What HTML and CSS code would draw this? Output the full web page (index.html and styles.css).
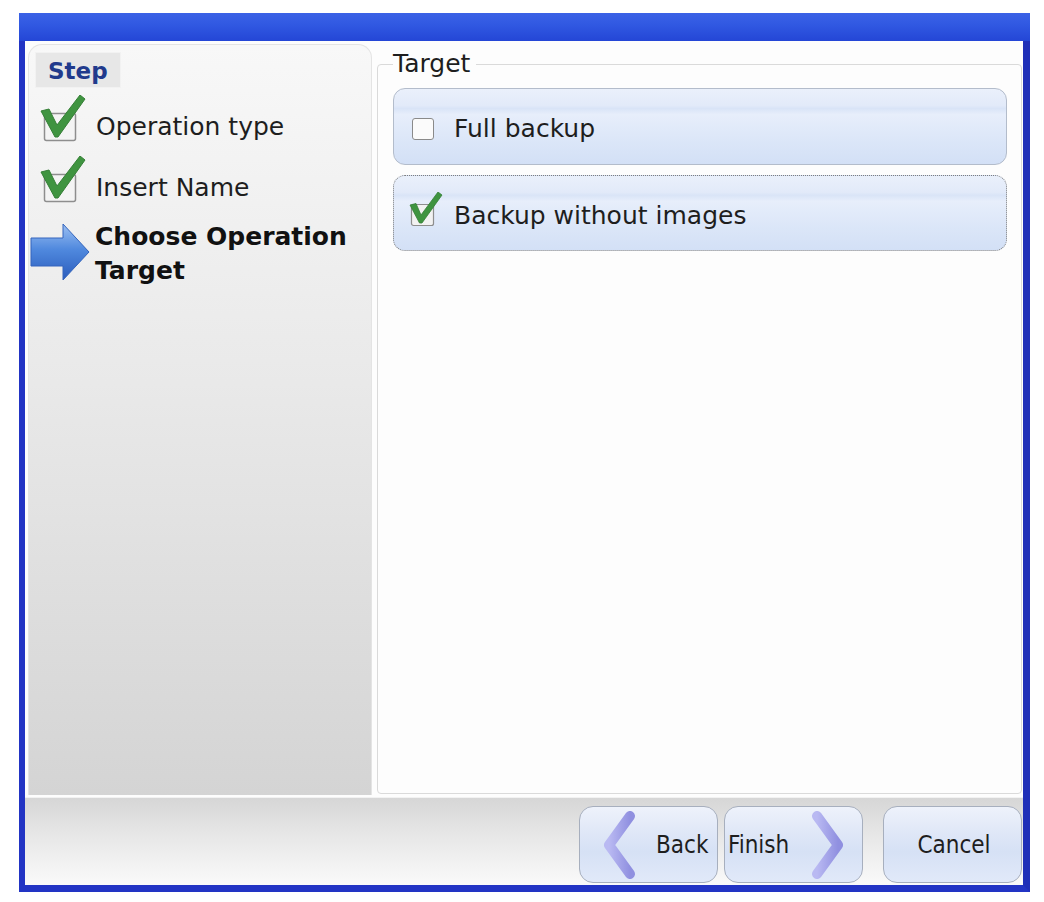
FILE: index.html
```html
<!DOCTYPE html>
<html>
<head>
<meta charset="utf-8">
<link rel="stylesheet" href="styles.css">
</head>
<body>
<div class="window">
  <div class="titlebar"></div>
  <div class="content">
    <div class="steps">
      <div class="step-header">Step</div>
      <div class="step step-1">
        <svg class="check-icon" width="46" height="50" viewBox="0 0 46 50">
          <rect x="4.5" y="18.5" width="31" height="27" rx="2" fill="#f4f4f4" stroke="#8e8e8e" stroke-width="1.5"/>
          <path d="M1 16 L9 14 L17 30 L40 0 L45 4 L18 42 L15 42 Z" fill="#3f9440" stroke="#357f36" stroke-width="1" stroke-linejoin="round"/>
        </svg>
        <span class="step-text">Operation type</span>
      </div>
      <div class="step step-2">
        <svg class="check-icon" width="46" height="50" viewBox="0 0 46 50">
          <rect x="4.5" y="18.5" width="31" height="27" rx="2" fill="#f4f4f4" stroke="#8e8e8e" stroke-width="1.5"/>
          <path d="M1 16 L9 14 L17 30 L40 0 L45 4 L18 42 L15 42 Z" fill="#3f9440" stroke="#357f36" stroke-width="1" stroke-linejoin="round"/>
        </svg>
        <span class="step-text">Insert Name</span>
      </div>
      <div class="step step-current">
        <svg class="arrow-icon" width="60" height="58" viewBox="0 0 60 58">
          <defs>
            <linearGradient id="ag" x1="0" y1="0" x2="0" y2="1">
              <stop offset="0" stop-color="#9cc0f2"/>
              <stop offset="0.45" stop-color="#5089de"/>
              <stop offset="1" stop-color="#2a5cbc"/>
            </linearGradient>
          </defs>
          <path d="M1 15 L33 15 L33 1 L59 29 L33 57 L33 43 L1 43 Z" fill="url(#ag)" stroke="#3465bd" stroke-width="1" stroke-linejoin="round"/>
        </svg>
        <span class="step-text bold">Choose Operation<br>Target</span>
      </div>
    </div>
    <div class="main">
      <fieldset class="target">
        <legend>Target</legend>
        <div class="option">
          <span class="box"></span>
          <span class="option-text">Full backup</span>
        </div>
        <div class="option option-focused">
          <svg class="small-check" width="34" height="36" viewBox="0 0 34 36">
            <rect x="2.5" y="12.5" width="22" height="21" rx="2" fill="#f2f2f2" stroke="#8e8e8e" stroke-width="1.2"/>
            <path d="M1 13 L7 11.5 L12 23 L29 0 L33 3 L13 31 L10.5 31 Z" fill="#3f9440" stroke="#357f36" stroke-width="0.8" stroke-linejoin="round"/>
          </svg>
          <span class="option-text">Backup without images</span>
        </div>
      </fieldset>
    </div>
  </div>
  <div class="footer">
    <div class="btn btn-back">
      <svg class="chev" width="34" height="68" viewBox="0 0 34 68">
        <defs>
          <linearGradient id="cg" x1="0" y1="0" x2="1" y2="0">
            <stop offset="0" stop-color="#b9b9f2"/>
            <stop offset="1" stop-color="#9090e0"/>
          </linearGradient>
        </defs>
        <path d="M28 5 L7 34 L28 63" fill="none" stroke="url(#cg)" stroke-width="10" stroke-linecap="round" stroke-linejoin="round"/>
      </svg>
      <span class="btn-text">Back</span>
    </div>
    <div class="btn btn-finish">
      <span class="btn-text">Finish</span>
      <svg class="chev" width="34" height="68" viewBox="0 0 34 68">
        <path d="M6 5 L27 34 L6 63" fill="none" stroke="url(#cg)" stroke-width="10" stroke-linecap="round" stroke-linejoin="round"/>
      </svg>
    </div>
    <div class="btn btn-cancel">
      <span class="btn-text">Cancel</span>
    </div>
  </div>
</div>
</body>
</html>
```
FILE: styles.css
```css
html, body {
  margin: 0;
  padding: 0;
  background: #ffffff;
}
body {
  font-family: "DejaVu Sans", sans-serif;
  color: #1c1c1c;
}
.window {
  margin: 13px 0 0 19px;
  width: 998px;
  border-left: 6px solid #2234c4;
  border-right: 7px solid #1f2fb8;
  border-bottom: 7px solid #2234c4;
  background: #fdfdfd;
}
.titlebar {
  height: 28px;
  margin: 0 -7px 0 -6px;
  background: linear-gradient(to bottom, #3b62e6 0%, #3159e2 40%, #2446d6 100%);
}
.content {
  display: flex;
  height: 756px;
}
.steps {
  width: 344px;
  margin: 3px 0 2px 3px;
  box-sizing: border-box;
  padding: 7px 0 0 6px;
  border: 1px solid #e4e4e4;
  border-bottom: none;
  border-radius: 14px 14px 0 0;
  background: linear-gradient(to bottom, #f8f8f8 0%, #e9e9e9 45%, #d4d4d4 100%);
  display: flex;
  flex-direction: column;
}
.step-header {
  width: 86px;
  height: 36px;
  box-sizing: border-box;
  padding-left: 12px;
  background: #e7e7e7;
  border: 1px solid #f2f2f2;
  color: #213a8c;
  font-weight: bold;
  font-size: 23px;
  line-height: 36px;
}
.step {
  display: flex;
  align-items: flex-end;
}
.step-1 {
  margin-top: 7px;
}
.step-2 {
  margin-top: 11px;
}
.check-icon {
  margin-left: 5px;
  margin-right: 10px;
  flex-shrink: 0;
}
.step-text {
  font-size: 25px;
  line-height: 30px;
  margin-bottom: 3px;
  color: #1e1e1e;
}
.step-current {
  margin-top: 14px;
  align-items: flex-start;
}
.arrow-icon {
  margin-left: -5px;
  margin-right: 5px;
  margin-top: 3px;
  flex-shrink: 0;
}
.step-text.bold {
  font-weight: bold;
  font-size: 25px;
  line-height: 34px;
  margin-bottom: 0;
  color: #111;
}
.main {
  width: 646px;
  margin-left: 5px;
  box-sizing: border-box;
  padding: 9px 1px 3px 0;
  display: flex;
}
.target {
  flex: 1;
  margin: 0;
  padding: 0 14px 0 15px;
  border: 1px solid #dadada;
  border-radius: 4px;
}
.target legend {
  padding: 0 6px 0 0;
  font-size: 25px;
  line-height: 28px;
  color: #1e1e1e;
}
.option {
  margin-top: 10px;
  height: 77px;
  box-sizing: border-box;
  border: 1px solid #b3bccb;
  border-radius: 12px;
  background: linear-gradient(to bottom, #eaf0fb 0%, #e2eaf9 22%, #d9e4f7 26%, #e7eefb 34%, #dbe6f8 70%, #d3e0f6 100%);
  display: flex;
  align-items: center;
  padding-left: 18px;
  padding-top: 4px;
}
.option-focused {
  height: 76px;
  border: 1px dotted #7e7e7e;
  padding-top: 6px;
}
.box {
  width: 22px;
  height: 22px;
  box-sizing: border-box;
  border: 1.5px solid #8a8a8a;
  border-radius: 3px;
  background: #fbfbfb;
  margin-right: 20px;
}
.small-check {
  margin-left: -3px;
  margin-right: 11px;
  margin-top: -12px;
}
.option-text {
  font-size: 25px;
  line-height: 30px;
  color: #1e1e1e;
}
.footer {
  height: 88px;
  box-sizing: border-box;
  padding: 8px 1px 3px 0;
  border-top: 1px solid #f2f2f2;
  background: linear-gradient(to bottom, #d6d6d6 0%, #e6e6e6 40%, #fafafa 100%);
  display: flex;
  justify-content: flex-end;
}
.btn {
  width: 139px;
  height: 77px;
  box-sizing: border-box;
  border: 1px solid #a7afbe;
  border-radius: 14px;
  background: linear-gradient(to bottom, #eef2fb 0%, #dfe7f7 35%, #d6e1f5 60%, #e1e9f9 100%);
  display: flex;
  align-items: center;
  font-family: "DejaVu Sans Condensed", "DejaVu Sans", sans-serif;
}
.btn-text {
  font-size: 24px;
  line-height: 30px;
  color: #1e1e1e;
}
.btn-back {
  padding-left: 22px;
}
.btn-back .chev {
  margin-right: 20px;
}
.btn-finish {
  margin-left: 6px;
  padding-left: 3px;
}
.btn-finish .chev {
  margin-left: 22px;
}
.btn-cancel {
  margin-left: 20px;
  justify-content: center;
  padding-left: 3px;
}
```
